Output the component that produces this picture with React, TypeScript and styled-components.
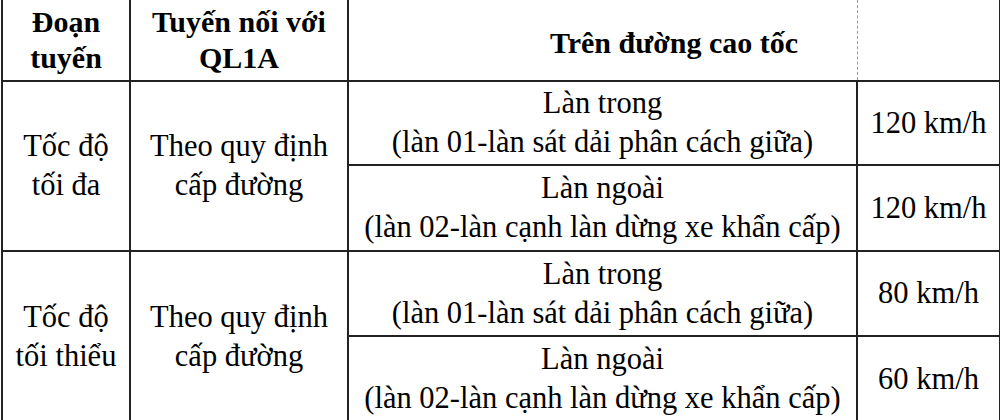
import * as React from 'react';
import styled, { createGlobalStyle } from 'styled-components';

const GlobalStyle = createGlobalStyle`
  html, body {
    margin: 0;
    padding: 0;
    background: #fff;
    overflow: hidden;
  }
`;

const Table = styled.table`
  width: 998px;
  margin-left: 1px;
  border-collapse: collapse;
  table-layout: fixed;
  font-family: "Liberation Serif", "Times New Roman", serif;
  color: #000;
  font-size: 30.5px;
  line-height: 39px;
`;

const HeadRow = styled.tr`
  height: 81px;
`;

const BodyRow = styled.tr<{ $h: number }>`
  height: ${(p) => p.$h}px;
`;

const HeadCell = styled.th`
  font-weight: bold;
  font-size: 30px;
  line-height: 36px;
  text-align: center;
  vertical-align: middle;
  padding: 0;
  border: 2px solid #222;
  border-top: none;
`;

// spans the lane + speed columns; the grey dashed gridline marks the hidden split
const SpanHeadCell = styled(HeadCell)`
  position: relative;
  padding-top: 6px;

  &::after {
    content: '';
    position: absolute;
    top: 0;
    bottom: 0;
    left: 508px;
    border-left: 1px dashed #9a9a9a;
  }
`;

const Cell = styled.td`
  font-weight: normal;
  text-align: center;
  vertical-align: middle;
  padding: 0;
  border: 2px solid #222;
`;

const Line = styled.div`
  white-space: nowrap;
`;

type Lane = { name: string; note: string; speed: string };
type Group = { label: [string, string]; link: [string, string]; lanes: Lane[]; heights: number[] };

const inner = '(làn 01-làn sát dải phân cách giữa)';
const outer = '(làn 02-làn cạnh làn dừng xe khẩn cấp)';

const groups: Group[] = [
  {
    label: ['Tốc độ', 'tối đa'],
    link: ['Theo quy định', 'cấp đường'],
    lanes: [
      { name: 'Làn trong', note: inner, speed: '120 km/h' },
      { name: 'Làn ngoài', note: outer, speed: '120 km/h' },
    ],
    heights: [84, 86],
  },
  {
    label: ['Tốc độ', 'tối thiểu'],
    link: ['Theo quy định', 'cấp đường'],
    lanes: [
      { name: 'Làn trong', note: inner, speed: '80 km/h' },
      { name: 'Làn ngoài', note: outer, speed: '60 km/h' },
    ],
    heights: [85, 86],
  },
];

const App = () => {
  return (
    <>
      <GlobalStyle />
      <Table>
        <colgroup>
          <col style={{ width: 128 }} />
          <col style={{ width: 218 }} />
          <col style={{ width: 509 }} />
          <col style={{ width: 143 }} />
        </colgroup>
        <thead>
          <HeadRow>
            <HeadCell>
              <Line>Đoạn</Line>
              <Line>tuyến</Line>
            </HeadCell>
            <HeadCell>
              <Line>Tuyến nối với</Line>
              <Line>QL1A</Line>
            </HeadCell>
            <SpanHeadCell colSpan={2}>Trên đường cao tốc</SpanHeadCell>
          </HeadRow>
        </thead>
        <tbody>
          {groups.map((g, gi) =>
            g.lanes.map((lane, li) => (
              <BodyRow key={`${gi}-${li}`} $h={g.heights[li]}>
                {li === 0 && (
                  <>
                    <Cell rowSpan={g.lanes.length}>
                      <Line>{g.label[0]}</Line>
                      <Line>{g.label[1]}</Line>
                    </Cell>
                    <Cell rowSpan={g.lanes.length}>
                      <Line>{g.link[0]}</Line>
                      <Line>{g.link[1]}</Line>
                    </Cell>
                  </>
                )}
                <Cell>
                  <Line>{lane.name}</Line>
                  <Line>{lane.note}</Line>
                </Cell>
                <Cell>{lane.speed}</Cell>
              </BodyRow>
            ))
          )}
        </tbody>
      </Table>
    </>
  );
};

export default App;
